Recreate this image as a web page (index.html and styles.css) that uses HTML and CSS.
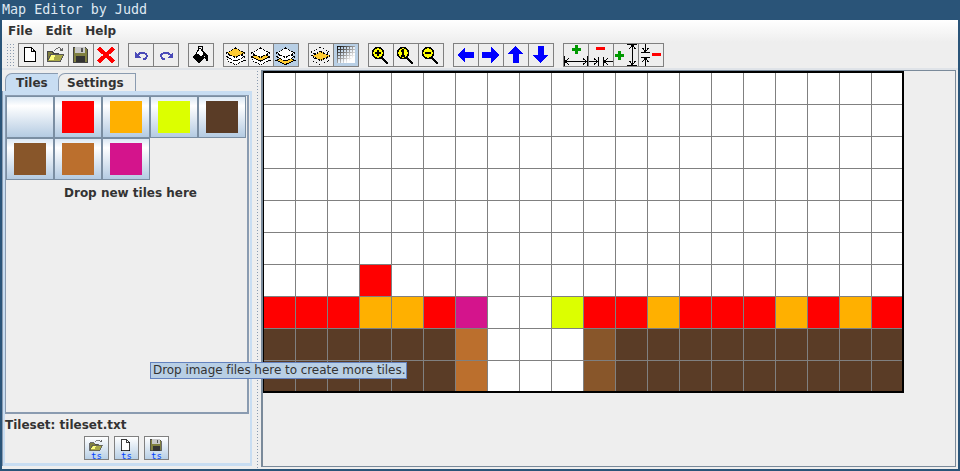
FILE: index.html
```html
<!DOCTYPE html>
<html lang="en">
<head>
    <meta charset="UTF-8">
    <title>Map Editor by Judd</title>
    <link rel="stylesheet" href="styles.css">
</head>
<body>
    <svg class="icon-defs" width="0" height="0">
        <linearGradient id="grid-fade" x1="0" y1="0" x2="1" y2="1">
            <stop offset="0" stop-color="#000"/>
            <stop offset="0.8" stop-color="#fff"/>
        </linearGradient>
        <linearGradient id="grid-bg" x1="0" y1="0" x2="1" y2="1">
            <stop offset="0.2" stop-color="#b8cfe5"/>
            <stop offset="0.7" stop-color="#fff"/>
        </linearGradient>
        <symbol id="i-new" viewBox="0 0 24 22">
            <path d="M5.500 3.500h7l3.500 4v10h-10.500z" fill="#fff" stroke="#000"/>
            <path d="M12.500 3.500v4h3.500" fill="none" stroke="#000"/>
        </symbol>
        <symbol id="i-open" viewBox="0 0 24 22">
            <path d="M3.500 7.500h5l1 2h5v7.500h-11z" fill="#808040" stroke="#444"/>
            <path d="M3.500 17.500l3-7h13l-3 7z" fill="#a8a848" stroke="#555"/>
            <path d="M5 16l2.500-5h4l-2 5z" fill="#ffff80"/>
            <path d="M10 7q3-4 6-3l1 1.500" fill="none" stroke="#666"/>
            <path d="M15 7h4v-4z" fill="#666"/>
        </symbol>
        <symbol id="i-save" viewBox="0 0 24 22">
            <path d="M4 3h12l2 2v13h-14z" fill="#808040" stroke="#444"/>
            <rect x="6" y="3" width="10" height="6" fill="#c8c8c8"/>
            <rect x="12" y="4" width="2" height="4" fill="#555"/>
            <rect x="7" y="12" width="9" height="6" fill="#333"/>
        </symbol>
        <symbol id="i-delete" viewBox="0 0 24 22">
            <path d="M4.500 4l15 14M19.500 4l-15 14" fill="none" stroke="#f00" stroke-width="4"/>
        </symbol>
        <symbol id="i-undo" viewBox="0 0 24 22">
            <path d="M8 11q5-4 9-1 2 2-1 5h-2" fill="none" stroke="#4a4ab8" stroke-width="2"/>
            <path d="M6 8v6h6z" fill="#4a4ab8"/>
        </symbol>
        <symbol id="i-redo" viewBox="0 0 24 22">
            <path d="M17 11q-5-4-9-1-2 2 1 5h2" fill="none" stroke="#4a4ab8" stroke-width="2"/>
            <path d="M19 8v6h-6z" fill="#4a4ab8"/>
        </symbol>
        <symbol id="i-fill" viewBox="0 0 24 22">
            <path d="M3 13l6-6 7 6-6 6z" fill="#000"/>
            <path d="M7 9l4-5 5 6-4 3z" fill="#fff" stroke="#000"/>
            <path d="M9 6v-4h4l1 4" fill="none" stroke="#000"/>
            <path d="M15 7l4 5v5h-2l-1-4-2-2z" fill="#000"/>
        </symbol>
        <symbol id="i-layers-top" viewBox="0 0 24 22">
            <path d="M11.500 11.500l9 5-9 4-9-4z" fill="#fff" stroke="#000" stroke-dasharray="2 1"/>
            <path d="M11.500 8l9 5-9 4-9-4z" fill="#fff" stroke="#000" stroke-dasharray="2 1"/>
            <path d="M11.500 4l9 5-9 4.500-9-4.500z" fill="#fc3" stroke="#000" stroke-dasharray="2 1"/>
        </symbol>
        <symbol id="i-layers-mid" viewBox="0 0 24 22">
            <path d="M11.500 11.500l9 5-9 4-9-4z" fill="#fff" stroke="#000" stroke-dasharray="2 1"/>
            <path d="M11.500 8l9 5-9 4-9-4z" fill="#fc3" stroke="#000"/>
            <path d="M11.500 4l9 5-9 4.500-9-4.500z" fill="#fff" stroke="#000" stroke-dasharray="2 1"/>
        </symbol>
        <symbol id="i-layers-low" viewBox="0 0 24 22">
            <path d="M11.500 11.500l9 5-9 4-9-4z" fill="#fc3" stroke="#000"/>
            <path d="M11.500 8l9 5-9 4-9-4z" fill="#fff" stroke="#000" stroke-dasharray="2 1"/>
            <path d="M11.500 4l9 5-9 4.500-9-4.500z" fill="#fff" stroke="#000" stroke-dasharray="2 1"/>
        </symbol>
        <symbol id="i-layer-single" viewBox="0 0 24 22">
            <path d="M11.500 3l9 5-9 4.500-9-4.500z" fill="none" stroke="#000" stroke-dasharray="1 2"/>
            <path d="M11.500 11.500l9 5-9 4-9-4z" fill="none" stroke="#000" stroke-dasharray="1 2"/>
            <path d="M11.500 7.500l9 4.500-9 4.500-9-4.500z" fill="#fc3" stroke="#000" stroke-dasharray="2 1"/>
        </symbol>
        <symbol id="i-grid" viewBox="0 0 24 22">
            <rect x="3" y="2" width="18" height="17" fill="url(#grid-bg)"/>
            <path d="M3.500 2v17M6.500 2v17M9.500 2v17M12.500 2v17M15.500 2v17M18.500 2v17M3 2.500h18M3 5.500h18M3 8.500h18M3 11.500h18M3 14.500h18" fill="none" stroke="url(#grid-fade)"/>
        </symbol>
        <symbol id="i-zoom-in" viewBox="0 0 24 22">
            <path d="M13 14l6 6" stroke="#000" stroke-width="2.500"/>
            <circle cx="9" cy="9" r="5.500" fill="#ff0" stroke="#000" stroke-width="1.500"/>
            <path d="M9 6v6M6 9h6" stroke="#000" stroke-width="2"/>
        </symbol>
        <symbol id="i-zoom-one" viewBox="0 0 24 22">
            <path d="M13 14l6 6" stroke="#000" stroke-width="2.500"/>
            <circle cx="9" cy="9" r="5.500" fill="#ff0" stroke="#000" stroke-width="1.500"/>
            <path d="M7 7l2-1v6M7 12h4" fill="none" stroke="#000" stroke-width="1.500"/>
        </symbol>
        <symbol id="i-zoom-out" viewBox="0 0 24 22">
            <path d="M13 14l6 6" stroke="#000" stroke-width="2.500"/>
            <circle cx="9" cy="9" r="5.500" fill="#ff0" stroke="#000" stroke-width="1.500"/>
            <path d="M6 9h6" stroke="#000" stroke-width="2"/>
        </symbol>
        <symbol id="i-left" viewBox="0 0 24 22">
            <path d="M3 11l8-8v5h9v6h-9v5z" fill="#00f"/>
        </symbol>
        <symbol id="i-right" viewBox="0 0 24 22">
            <path d="M20 11l-8-8v5h-9v6h9v5z" fill="#00f"/>
        </symbol>
        <symbol id="i-up" viewBox="0 0 24 22">
            <path d="M11.500 2l8 8h-5v9h-6v-9h-5z" fill="#00f"/>
        </symbol>
        <symbol id="i-down" viewBox="0 0 24 22">
            <path d="M11.500 19l-8-8h5v-9h6v9h5z" fill="#00f"/>
        </symbol>
        <symbol id="i-wider" viewBox="0 0 24 22">
            <path d="M11 1h3v3h3v3h-3v3h-3v-3h-3v-3h3z" fill="#090"/>
            <path d="M0.500 12v10M23.500 12v10M1 17.500h22M1 17.500l4-3M1 17.500l4 3M23 17.500l-4-3M23 17.500l-4 3" fill="none" stroke="#000"/>
        </symbol>
        <symbol id="i-narrower" viewBox="0 0 24 22">
            <path d="M7 3h9v3h-9z" fill="#f00"/>
            <path d="M9.500 13v9M14.500 13v9M0 17.500h9M15 17.500h9M9 17.500l-4-3M9 17.500l-4 3M15 17.500l4-3M15 17.500l4 3" fill="none" stroke="#000"/>
        </symbol>
        <symbol id="i-taller" viewBox="0 0 24 22">
            <path d="M4 7h3v3h3v3h-3v3h-3v-3h-3v-3h3z" fill="#090"/>
            <path d="M13 0.500h10M13 21.500h10M18.500 1v20M18.500 1l-3 4M18.500 1l3 4M18.500 21l-3-4M18.500 21l3-4" fill="none" stroke="#000"/>
        </symbol>
        <symbol id="i-shorter" viewBox="0 0 24 22">
            <path d="M13 9h9v3h-9z" fill="#f00"/>
            <path d="M2 8.500h9M2 13.500h9M6.500 0v8M6.500 8l-3-4M6.500 8l3-4M6.500 14v8M6.500 14l-3 4M6.500 14l3 4" fill="none" stroke="#000"/>
        </symbol>
    </svg>

    <div class="titlebar">Map Editor by Judd</div>

    <div class="frame">
        <div class="menubar">
            <span class="menu-item">File</span>
            <span class="menu-item">Edit</span>
            <span class="menu-item">Help</span>
        </div>

        <div class="toolbar">
            <div class="grip"></div>
            <div class="tool-group">
                <button class="tool"><svg><use href="#i-new"/></svg></button>
                <button class="tool"><svg><use href="#i-open"/></svg></button>
                <button class="tool"><svg><use href="#i-save"/></svg></button>
                <button class="tool"><svg><use href="#i-delete"/></svg></button>
            </div>
            <div class="tool-group">
                <button class="tool"><svg><use href="#i-undo"/></svg></button>
                <button class="tool"><svg><use href="#i-redo"/></svg></button>
            </div>
            <div class="tool-group">
                <button class="tool"><svg><use href="#i-fill"/></svg></button>
            </div>
            <div class="tool-group">
                <button class="tool"><svg><use href="#i-layers-top"/></svg></button>
                <button class="tool"><svg><use href="#i-layers-mid"/></svg></button>
                <button class="tool tool-on"><svg><use href="#i-layers-low"/></svg></button>
            </div>
            <div class="tool-group">
                <button class="tool"><svg><use href="#i-layer-single"/></svg></button>
                <button class="tool tool-on"><svg><use href="#i-grid"/></svg></button>
            </div>
            <div class="tool-group">
                <button class="tool"><svg><use href="#i-zoom-in"/></svg></button>
                <button class="tool"><svg><use href="#i-zoom-one"/></svg></button>
                <button class="tool"><svg><use href="#i-zoom-out"/></svg></button>
            </div>
            <div class="tool-group">
                <button class="tool"><svg><use href="#i-left"/></svg></button>
                <button class="tool"><svg><use href="#i-right"/></svg></button>
                <button class="tool"><svg><use href="#i-up"/></svg></button>
                <button class="tool"><svg><use href="#i-down"/></svg></button>
            </div>
            <div class="tool-group">
                <button class="tool"><svg><use href="#i-wider"/></svg></button>
                <button class="tool"><svg><use href="#i-narrower"/></svg></button>
                <button class="tool"><svg><use href="#i-taller"/></svg></button>
                <button class="tool"><svg><use href="#i-shorter"/></svg></button>
            </div>
        </div>

        <div class="main">
            <div class="side">
                <div class="tabs">
                    <div class="tab tab-on">Tiles</div>
                    <div class="tab">Settings</div>
                </div>
                <div class="tab-panel">
                    <div class="tile-area">
                        <div class="tile-grid">
                            <div class="tile"></div>
                            <div class="tile"><div class="swatch c-red"></div></div>
                            <div class="tile"><div class="swatch c-orange"></div></div>
                            <div class="tile"><div class="swatch c-lime"></div></div>
                            <div class="tile"><div class="swatch c-dark"></div></div>
                            <div class="tile"><div class="swatch c-mid"></div></div>
                            <div class="tile"><div class="swatch c-tan"></div></div>
                            <div class="tile"><div class="swatch c-pink"></div></div>
                        </div>
                        <div class="drop-label">Drop new tiles here</div>
                    </div>
                    <div class="tileset-name">Tileset: tileset.txt</div>
                    <div class="tileset-tools">
                        <button class="ts-tool"><svg><use href="#i-open"/></svg><span>ts</span></button>
                        <button class="ts-tool"><svg><use href="#i-new"/></svg><span>ts</span></button>
                        <button class="ts-tool"><svg><use href="#i-save"/></svg><span>ts</span></button>
                    </div>
                </div>
            </div>
            <div class="splitter"></div>
            <div class="map-pane">
                <div class="map" id="map"></div>
            </div>
        </div>
    </div>

    <div class="tooltip">Drop image files here to create more tiles.</div>

    <script src="map.js"></script>
</body>
</html>
```

FILE: styles.css
```css
body {
    margin: 0;
    width: 960px;
    height: 471px;
    overflow: hidden;
    background-color: #2a5478;
    font-family: "DejaVu Sans", sans-serif;
    color: #333333;
    position: relative;
}

.icon-defs {
    position: absolute;
}

.titlebar {
    height: 20px;
    line-height: 19px;
    padding-left: 2px;
    font-family: "DejaVu Sans Mono", monospace;
    font-size: 13.4px;
    color: #dfe8f2;
}

.frame {
    margin: 0 2px;
    height: 449px;
    background-color: #eeeeee;
}

.menubar {
    height: 22px;
    display: flex;
    align-items: center;
    padding-left: 6px;
    gap: 13px;
    font-size: 12px;
    font-weight: bold;
    background: linear-gradient(#ffffff, #eeeeee);
}

.toolbar {
    height: 26px;
    display: flex;
    align-items: flex-start;
    padding: 1px 0 0 4px;
    box-sizing: border-box;
    background-color: #eeeeee;
}

.grip {
    width: 8px;
    height: 24px;
    margin-right: 4px;
    background-image: radial-gradient(#8a9bb0 0.7px, transparent 0.8px);
    background-size: 3px 3px;
}

.tool-group {
    display: flex;
    margin-right: 10px;
}

.tool {
    width: 26px;
    height: 24px;
    margin-right: -1px;
    padding: 0;
    box-sizing: border-box;
    border: 1px solid #808080;
    background-color: #eeeeee;
}

.tool svg {
    display: block;
    width: 24px;
    height: 22px;
    overflow: visible;
    shape-rendering: crispEdges;
}

.tool-on {
    background-color: #b8cfe5;
}

.main {
    height: 401px;
    display: flex;
    border-top: 2px solid #dfe3e8;
    box-sizing: border-box;
}

.side {
    width: 250px;
    padding-top: 3px;
    box-sizing: border-box;
}

.tabs {
    display: flex;
    height: 18px;
    padding-left: 3px;
}

.tab {
    width: 78px;
    height: 18px;
    padding: 1px 0 0 8px;
    box-sizing: border-box;
    line-height: 17px;
    font-size: 12px;
    font-weight: bold;
    border: 1px solid #8a9bb0;
    border-bottom: none;
    border-radius: 7px 0 0 0;
}

.tab-on {
    width: 53px;
    padding-left: 10px;
    background-color: #c8ddf2;
    border-right: none;
}

.tab-panel {
    height: 375px;
    margin: 0 0 0 1px;
    border: 2px solid #c8ddf2;
    border-top-width: 4px;
    border-bottom-width: 3px;
    box-sizing: border-box;
    box-shadow: -1px 0 0 #8a9bb0;
}

.tile-area {
    width: 244px;
    height: 319px;
    box-sizing: border-box;
    border: 1px solid #8a9bb0;
    border-width: 1px 2px 2px 1px;
}

.tile-grid {
    display: grid;
    grid-template-columns: repeat(5, 48px);
    grid-auto-rows: 42px;
}

.tile {
    display: flex;
    align-items: center;
    justify-content: center;
    box-sizing: border-box;
    border: 1px solid #7a8ea2;
    background: linear-gradient(#dce8f4, #ffffff 22%, #b4cbe2);
}

.swatch {
    width: 32px;
    height: 32px;
}

.drop-label {
    padding: 6px 0 0 8px;
    text-align: center;
    font-size: 12px;
    font-weight: bold;
}

.tileset-name {
    height: 22px;
    padding-top: 2px;
    box-sizing: border-box;
    line-height: 18px;
    font-size: 12px;
    font-weight: bold;
}

.tileset-tools {
    display: flex;
    justify-content: center;
    gap: 5px;
    padding-right: 2px;
}

.ts-tool {
    width: 25px;
    height: 24px;
    padding: 0;
    box-sizing: border-box;
    border: 1px solid #808080;
    background: linear-gradient(#ffffff, #b8cfe5);
    display: flex;
    flex-direction: column;
    align-items: center;
}

.ts-tool svg {
    display: block;
    width: 23px;
    height: 17px;
    shape-rendering: crispEdges;
}

.ts-tool span {
    font-family: "DejaVu Sans Mono", monospace;
    font-size: 9px;
    line-height: 5px;
    color: #0040ff;
}

.splitter {
    width: 7px;
    margin-left: 2px;
    background-image: radial-gradient(#8a9bb0 0.7px, transparent 0.8px);
    background-size: 3px 3px;
    background-repeat: repeat-y;
    background-position: 2px 0;
}

.map-pane {
    width: 695px;
    height: 397px;
    box-sizing: border-box;
    border: 1px solid #7a8a9a;
    border-left-width: 2px;
}

.map {
    position: relative;
    display: grid;
    grid-template-columns: repeat(20, 32px);
    grid-auto-rows: 32px;
    width: 640px;
    margin-top: 1px;
}

/* black edge sits over the outer cells */
.map::after {
    content: "";
    position: absolute;
    left: 0;
    top: -1px;
    width: 641px;
    height: 322px;
    box-sizing: border-box;
    border: 2px solid #000000;
    border-left-width: 1px;
}

.cell {
    box-sizing: border-box;
    border-left: 1px solid #808080;
    border-top: 1px solid #808080;
    background-color: #ffffff;
}

.c-red { background-color: #ff0000; }
.c-orange { background-color: #ffb000; }
.c-lime { background-color: #dcff00; }
.c-dark { background-color: #5a3c26; }
.c-mid { background-color: #88562a; }
.c-tan { background-color: #bb6f2d; }
.c-pink { background-color: #d4148c; }

.tooltip {
    position: absolute;
    left: 150px;
    top: 362px;
    width: 257px;
    height: 17px;
    box-sizing: border-box;
    border: 1px solid #6382bf;
    background-color: #b8cfe5;
    font-size: 12px;
    letter-spacing: -0.05px;
    line-height: 15px;
    padding-left: 2px;
    white-space: nowrap;
}
```

FILE: map.js
```js
// one letter per cell, see the colour classes in styles.css
const mapRows = [
    '....................',
    '....................',
    '....................',
    '....................',
    '....................',
    '....................',
    '...r................',
    'rrroorp..lrrorrroror',
    'ddddddt...mddddddddd',
    'ddddddt...mddddddddd'
];

const cellColours = {
    r: 'c-red',
    o: 'c-orange',
    l: 'c-lime',
    d: 'c-dark',
    m: 'c-mid',
    t: 'c-tan',
    p: 'c-pink'
};

const map = document.getElementById('map');

mapRows.forEach(row => {
    for (const letter of row) {
        const cell = document.createElement('div');
        cell.className = 'cell ' + (cellColours[letter] || '');
        map.appendChild(cell);
    }
});
```
